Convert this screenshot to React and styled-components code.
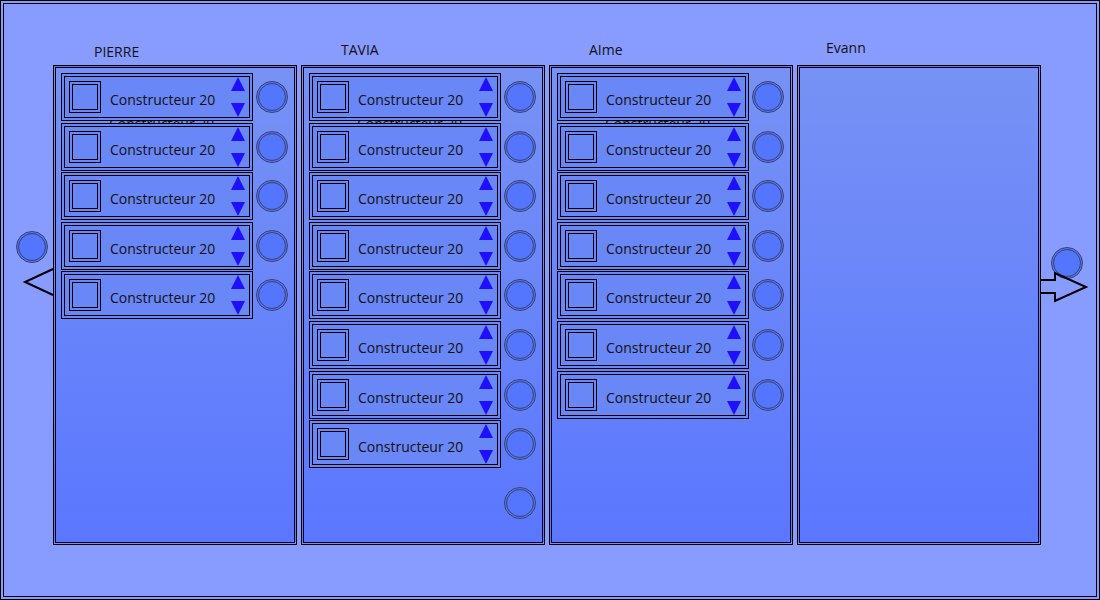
import * as React from 'react'
import styled, { createGlobalStyle } from 'styled-components'

const columns = [
  { name: 'PIERRE', cards: 5, indent: 41, lift: 4, ghost: true },
  { name: 'TAVIA', cards: 8, indent: 40, lift: 6, ghost: true, spare: true },
  { name: 'AIme', cards: 7, indent: 40, lift: 6, ghost: true },
  { name: 'Evann', cards: 0, indent: 29, lift: 8 },
]

export default function App() {
  return (
    <>
      <Global />
      <Frame>
        <LeftNav>
          <Knob $left={12} />
          <NavArrow width="29" height="30" style={{ marginLeft: 20, marginTop: 5 }}>
            <polyline points="29,1 1,14 29,27" fill="none" stroke="#000" strokeWidth="2" />
          </NavArrow>
        </LeftNav>

        <Board>
          {columns.map((col) => (
            <Column key={col.name}>
              <Title $indent={col.indent} $lift={col.lift}>
                {col.name}
              </Title>
              <Panel>
                {col.ghost && <Ghost>Constructeur 20</Ghost>}
                {Array.from({ length: col.cards }).map((_, i) => (
                  <Row key={i}>
                    <Card>
                      <Box />
                      <Label>Constructeur 20</Label>
                      <Spinner>
                        <Up />
                        <Down />
                      </Spinner>
                    </Card>
                    <Knob />
                  </Row>
                ))}
                {col.spare && (
                  <Row $offset={17}>
                    <Slot />
                    <Knob />
                  </Row>
                )}
              </Panel>
            </Column>
          ))}
        </Board>

        <RightNav>
          <Knob $left={10} />
          <NavArrow width="66" height="32" style={{ marginLeft: -18, marginTop: -7 }}>
            <rect x="0.5" y="8.5" width="13" height="13" fill="none" stroke="rgba(50,70,160,0.55)" />
            <polyline
              points="17,8 32,8 32,1 63,15 32,29 32,21 17,21"
              fill="none"
              stroke="#000"
              strokeWidth="2"
            />
          </NavArrow>
        </RightNav>
      </Frame>
    </>
  )
}

const Global = createGlobalStyle`
  body {
    margin: 0;
    font-family: "Open Sans", "Noto Sans", sans-serif;
  }
`

const Frame = styled.div`
  width: 1100px;
  height: 600px;
  box-sizing: border-box;
  border: 4px double #000;
  background: #889bff;
  display: flex;
  align-items: flex-start;
`

const LeftNav = styled.div`
  width: 49px;
  flex: none;
  display: flex;
  flex-direction: column;
  padding-top: 227px;
`

const RightNav = styled.div`
  width: 55px;
  flex: none;
  display: flex;
  flex-direction: column;
  padding-top: 243px;
`

const NavArrow = styled.svg`
  display: block;
  overflow: visible;
`

const Board = styled.div`
  display: flex;
  gap: 4px;
`

const Column = styled.div`
  width: 244px;
  display: flex;
  flex-direction: column;
`

const Title = styled.div`
  height: 61px;
  box-sizing: border-box;
  display: flex;
  align-items: flex-end;
  padding-left: ${(p) => p.$indent}px;
  padding-bottom: ${(p) => p.$lift}px;
  font-size: 14px;
  line-height: 18px;
  color: #111;
`

const Panel = styled.div`
  position: relative;
  height: 480px;
  box-sizing: border-box;
  border: 3px double #000;
  background: linear-gradient(to bottom, #7792f4, #5a77ff);
  padding: 5px 0 0 5px;
  display: flex;
  flex-direction: column;
  gap: 1.6px;
`

const Ghost = styled.div`
  position: absolute;
  top: 46px;
  left: 53px;
  font-size: 14px;
  line-height: 19px;
  color: #111;
  z-index: 0;
`

const Row = styled.div`
  position: relative;
  z-index: 1;
  display: flex;
  align-items: center;
  gap: 3px;
  margin-top: ${(p) => p.$offset || 0}px;
`

const Card = styled.div`
  width: 192px;
  height: 48px;
  box-sizing: border-box;
  border: 4px double #000;
  background: #6987f6;
  display: flex;
  align-items: center;
  padding: 0 4px;
`

const Slot = styled.div`
  width: 192px;
`

const Box = styled.div`
  width: 32px;
  height: 32px;
  flex: none;
  box-sizing: border-box;
  border: 4px double #000;
`

const Label = styled.div`
  flex: 1;
  margin-left: 9px;
  padding-top: 5px;
  font-size: 14px;
  line-height: 19px;
  color: #111;
  white-space: nowrap;
`

const Spinner = styled.div`
  height: 40px;
  display: flex;
  flex-direction: column;
  justify-content: space-between;
  align-items: center;
  width: 14px;
`

const Up = styled.div`
  width: 0;
  height: 0;
  border-left: 7px solid transparent;
  border-right: 7px solid transparent;
  border-bottom: 14px solid #1e0fff;
`

const Down = styled.div`
  width: 0;
  height: 0;
  border-left: 7px solid transparent;
  border-right: 7px solid transparent;
  border-top: 14px solid #1e0fff;
`

const Knob = styled.div`
  width: 32px;
  height: 32px;
  flex: none;
  box-sizing: border-box;
  border-radius: 50%;
  border: 3px double #3b4266;
  background: #5476ff;
  margin-left: ${(p) => p.$left || 0}px;
`
